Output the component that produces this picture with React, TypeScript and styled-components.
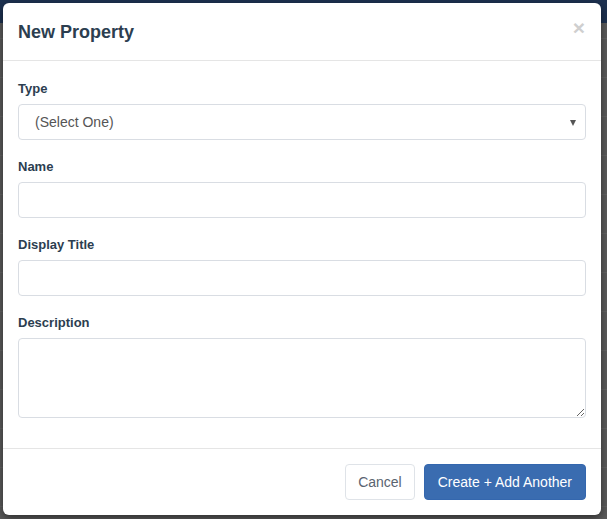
import styled, { createGlobalStyle } from "styled-components";

const GlobalStyle = createGlobalStyle`
  html, body {
    margin: 0;
    padding: 0;
    height: 100%;
  }
  body {
    font-family: "Liberation Sans", Arial, sans-serif;
    background:
      linear-gradient(to bottom, #1d3150 0, #1d3150 23px, transparent 23px),
      repeating-linear-gradient(to bottom, #5b5b5b 0, #5b5b5b 38px, #646464 38px, #646464 39px),
      #5b5b5b;
  }
`;

const Backdrop = styled.div`
  padding: 3px 6px 4px 3px;
`;

const Modal = styled.div`
  width: 598px;
  height: 512px;
  box-sizing: border-box;
  background: #fff;
  border-radius: 6px;
  box-shadow: 0 3px 9px rgba(0, 0, 0, 0.5);
  display: flex;
  flex-direction: column;
`;

const Header = styled.div`
  flex-shrink: 0;
  height: 58px;
  box-sizing: border-box;
  border-bottom: 1px solid #e5e5e5;
  display: flex;
  align-items: center;
  justify-content: space-between;
  padding: 1px 16px 0 15px;
`;

const Title = styled.h4`
  margin: 0;
  font-size: 18px;
  font-weight: 700;
  color: #2c3e50;
`;

const Close = styled.button`
  border: none;
  background: transparent;
  padding: 0;
  margin-top: -10px;
  font-family: "Liberation Sans", Arial, sans-serif;
  font-size: 21px;
  font-weight: 700;
  line-height: 1;
  color: #cfcfcf;
  cursor: pointer;
`;

const Body = styled.div`
  flex: 1;
  padding: 20px 15px 0 15px;
  border-bottom: 1px solid #e5e5e5;
`;

const Group = styled.div`
  margin-bottom: 19px;
`;

const Label = styled.label`
  display: block;
  font-size: 13px;
  line-height: 15px;
  font-weight: 700;
  color: #2c3e50;
  margin-bottom: 8px;
`;

const fieldBase = `
  width: 100%;
  box-sizing: border-box;
  border: 1px solid #d9dde3;
  border-radius: 4px;
  background: #fff;
  font-family: "Liberation Sans", Arial, sans-serif;
  font-size: 14px;
  color: #555;
  display: block;
  margin: 0;
`;

const SelectBox = styled.div`
  ${fieldBase}
  height: 36px;
  position: relative;
  display: flex;
  align-items: center;
  padding: 0 16px;
`;

const Caret = styled.span`
  position: absolute;
  right: 9px;
  top: 15px;
  width: 0;
  height: 0;
  border-left: 3px solid transparent;
  border-right: 3px solid transparent;
  border-top: 6px solid #555;
`;

const Input = styled.input`
  ${fieldBase}
  height: 36px;
  padding: 0 12px;
`;

const TextArea = styled.textarea`
  ${fieldBase}
  height: 80px;
  padding: 8px 12px;
  resize: vertical;
`;

const Footer = styled.div`
  flex-shrink: 0;
  height: 66px;
  box-sizing: border-box;
  display: flex;
  align-items: flex-start;
  justify-content: flex-end;
  gap: 9px;
  padding: 15px 15px 0 0;
`;

const Button = styled.button<{ $primary?: boolean }>`
  height: 36px;
  box-sizing: border-box;
  border-radius: 4px;
  font-family: "Liberation Sans", Arial, sans-serif;
  font-size: 14px;
  padding: 0 ${({ $primary }) => ($primary ? "13px" : "12px")};
  cursor: pointer;
  border: 1px solid ${({ $primary }) => ($primary ? "#3467ae" : "#dfe3e8")};
  background: ${({ $primary }) => ($primary ? "#3a6cb0" : "#fff")};
  color: ${({ $primary }) => ($primary ? "#fff" : "#5a6470")};
`;

export default function App() {
  return (
    <>
      <GlobalStyle />
      <Backdrop>
        <Modal>
          <Header>
            <Title>New Property</Title>
            <Close type="button" aria-label="Close">×</Close>
          </Header>
          <Body>
            <Group>
              <Label>Type</Label>
              <SelectBox>
                (Select One)
                <Caret />
              </SelectBox>
            </Group>
            <Group>
              <Label>Name</Label>
              <Input type="text" />
            </Group>
            <Group>
              <Label>Display Title</Label>
              <Input type="text" />
            </Group>
            <Group>
              <Label>Description</Label>
              <TextArea />
            </Group>
          </Body>
          <Footer>
            <Button type="button">Cancel</Button>
            <Button type="button" $primary>
              Create + Add Another
            </Button>
          </Footer>
        </Modal>
      </Backdrop>
    </>
  );
}
